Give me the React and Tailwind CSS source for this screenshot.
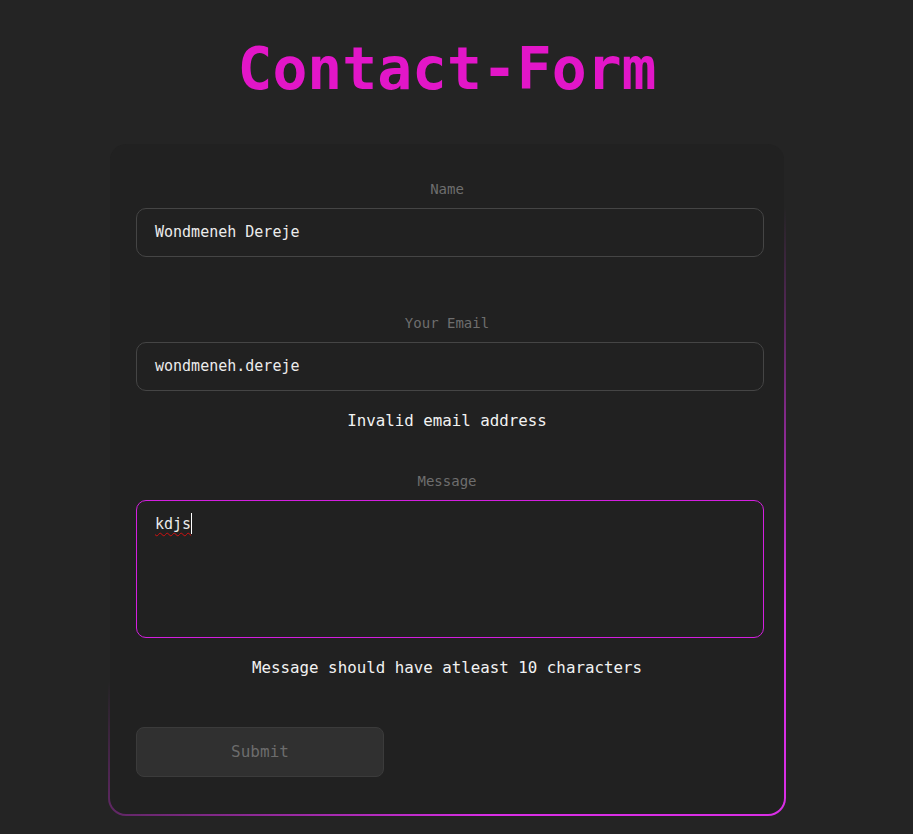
import React from "react";

const mono = { fontFamily: '"DejaVu Sans Mono", "Liberation Mono", monospace' };

function Label({ children, className = "" }) {
  return (
    <div className={"w-full text-center text-[14px] leading-[20px] text-[#6e6e6e] " + className}>
      {children}
    </div>
  );
}

function Field({ value, className = "" }) {
  return (
    <div
      className={
        "ml-[26px] w-[628px] h-[49px] rounded-[10px] border border-[#454545] bg-[#212121] pl-[18px] flex items-center text-[15px] text-[#ececec] " +
        className
      }
    >
      {value}
    </div>
  );
}

function ErrorText({ children, className = "" }) {
  return (
    <div className={"w-full text-center text-[15.8px] leading-[24px] text-[#f2f2f2] " + className}>
      {children}
    </div>
  );
}

export default function App() {
  return (
    <div className="min-h-[834px] w-full bg-[#242424]" style={mono}>
      <div className="w-[894px] flex flex-col items-center">
        <h1 className="mt-[40px] text-[58px] leading-none font-bold text-[#e216c8]">
          Contact-Form
        </h1>
        <div className="mt-[44px] w-[678px] rounded-[18px] p-[2px] bg-[linear-gradient(145deg,rgba(217,46,230,0)_47%,#d92ee6_82%)]">
          <div className="rounded-[16px] bg-[#212121] flex flex-col pt-[35px] pb-[37px]">
            <Label>Name</Label>
            <Field value="Wondmeneh Dereje" className="mt-[9px]" />

            <Label className="mt-[56px]">Your Email</Label>
            <Field value="wondmeneh.dereje" className="mt-[9px]" />
            <ErrorText className="mt-[18px]">Invalid email address</ErrorText>

            <Label className="mt-[38px]">Message</Label>
            <div className="mt-[9px] ml-[26px] w-[628px] h-[138px] rounded-[10px] border border-[#d41fe0] bg-[#212121] pl-[18px] pt-[11px] text-[15px] leading-[24px] text-[#ececec] flex items-start">
              <span className="underline decoration-wavy decoration-[#d01010] decoration-1 underline-offset-[3px]">
                kdjs
              </span>
              <span className="inline-block w-px h-[21px] mt-[1px] bg-white" />
            </div>
            <ErrorText className="mt-[18px]">
              Message should have atleast 10 characters
            </ErrorText>

            <button
              type="button"
              className="mt-[47px] ml-[26px] w-[248px] h-[50px] rounded-[8px] border border-[#3b3b3b] bg-[#303030] text-[16px] text-[#6c6c6c]"
              style={mono}
            >
              Submit
            </button>
          </div>
        </div>
      </div>
    </div>
  );
}
